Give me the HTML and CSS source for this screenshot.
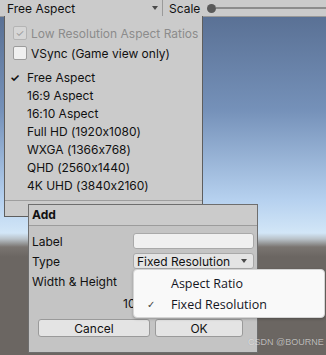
FILE: index.html
```html
<!DOCTYPE html>
<html lang="en">
<head>
    <meta charset="UTF-8">
    <title>Game View - Aspect</title>
    <link rel="stylesheet" href="styles.css">
</head>
<body>
    <div class="screen">
        <!-- Game view toolbar -->
        <div class="toolbar">
            <div class="tb-dropdown">
                <span>Free Aspect</span>
                <span class="tb-arrow"></span>
            </div>
            <div class="tb-scale">
                <span>Scale</span>
                <span class="knob"></span>
                <span class="track"></span>
            </div>
        </div>

        <!-- Scene behind the menus -->
        <div class="scene"></div>

        <!-- Aspect menu -->
        <div class="aspect-menu">
            <div class="check-row disabled">
                <span class="box checked">&#10003;</span>
                <span>Low Resolution Aspect Ratios</span>
            </div>
            <div class="check-row">
                <span class="box"></span>
                <span>VSync (Game view only)</span>
            </div>
            <ul class="aspects">
                <li class="active">Free Aspect</li>
                <li>16:9 Aspect</li>
                <li>16:10 Aspect</li>
                <li>Full HD (1920x1080)</li>
                <li>WXGA (1366x768)</li>
                <li>QHD (2560x1440)</li>
                <li>4K UHD (3840x2160)</li>
            </ul>
            <div class="menu-sep"></div>
        </div>

        <!-- Add dialog -->
        <div class="add-dialog">
            <div class="dlg-title">Add</div>
            <div class="dlg-body">
                <div class="field-row">
                    <label>Label</label>
                    <div class="text-field"></div>
                </div>
                <div class="field-row">
                    <label>Type</label>
                    <div class="popup-field">
                        <span>Fixed Resolution</span>
                        <span class="tb-arrow"></span>
                    </div>
                </div>
                <div class="field-row">
                    <label>Width &amp; Height</label>
                    <span class="num">1920</span>
                </div>
                <div class="field-row size-row">
                    <span class="num">1080</span>
                </div>
                <div class="buttons">
                    <button class="btn cancel">Cancel</button>
                    <button class="btn ok">OK</button>
                </div>
            </div>
        </div>

        <!-- Native popup for Type -->
        <div class="type-popup">
            <div class="popup-item">Aspect Ratio</div>
            <div class="popup-item selected">Fixed Resolution</div>
        </div>

        <div class="watermark">CSDN @BOURNE</div>
    </div>
</body>
</html>
```

FILE: styles.css
```css
body {
    margin: 0;
    padding: 0;
    font-family: Inter, "Noto Sans", sans-serif;
    font-size: 12px;
    font-feature-settings: "calt" 0;
    color: #111111;
}

.screen {
    position: relative;
    width: 326px;
    height: 355px;
    overflow: hidden;
    display: flex;
    flex-direction: column;
}

/* toolbar */
.toolbar {
    height: 16px;
    display: flex;
    align-items: center;
    background-color: #cbcbcb;
    border-bottom: 1px solid #999999;
}

.tb-dropdown {
    width: 160px;
    height: 16px;
    margin-left: 3px;
    padding: 0 4px;
    box-sizing: border-box;
    display: flex;
    align-items: center;
    justify-content: space-between;
    border-right: 1px solid #9a9a9a;
}

.tb-arrow {
    width: 0;
    height: 0;
    border-left: 3px solid transparent;
    border-right: 3px solid transparent;
    border-top: 4px solid #4a4a4a;
}

.tb-scale {
    flex: 1;
    display: flex;
    align-items: center;
    padding-left: 6px;
}

.knob {
    width: 9px;
    height: 9px;
    border-radius: 50%;
    background-color: #5a5a5a;
    margin-left: 7px;
}

.track {
    flex: 1;
    height: 2px;
    background-color: #8c8c8c;
}

/* scene */
.scene {
    flex: 1;
    background: linear-gradient(to bottom,
        #5a7195 0px,
        #7591b9 93px,
        #b6d1ef 183px,
        #d2e6f7 216px,
        #b9c2c9 222px,
        #7a7571 230px,
        #6b6662 240px,
        #6b6662 100%);
}

/* aspect menu */
.aspect-menu {
    position: absolute;
    left: 4px;
    top: 16px;
    width: 199px;
    height: 201px;
    box-sizing: border-box;
    background-color: #cbcbcb;
    border: 1px solid #5e5e5e;
    border-top: none;
    padding-top: 7px;
}

.check-row {
    height: 20px;
    display: flex;
    align-items: center;
    gap: 4px;
    padding-left: 8px;
}

.check-row.disabled {
    color: #8c8c8c;
}

.box {
    width: 12px;
    height: 12px;
    border: 1px solid #9c9c9c;
    border-radius: 2px;
    background-color: #f0f0f0;
    font-size: 10px;
    line-height: 12px;
    text-align: center;
    color: #9a9a9a;
}

.box.checked {
    background-color: #d6d6d6;
    border-color: #b4b4b4;
}

.aspects {
    list-style: none;
    margin: 6px 0 0 0;
    padding: 0;
}

.aspects li {
    height: 18px;
    line-height: 18px;
    padding-left: 22px;
    position: relative;
}

.aspects li.active:before {
    content: "\2713";
    position: absolute;
    left: 5px;
    font-size: 11px;
    font-weight: bold;
}

.menu-sep {
    height: 1px;
    margin: 5px 0 0 0;
    background-color: #9e9e9e;
}

/* add dialog */
.add-dialog {
    position: absolute;
    left: 28px;
    top: 204px;
    width: 230px;
    height: 149px;
    box-sizing: border-box;
    background-color: #c4c4c4;
    border: 1px solid #6e6e6e;
}

.dlg-title {
    height: 20px;
    line-height: 20px;
    padding-left: 3px;
    font-weight: bold;
    background-color: #cbcbcb;
    border-bottom: 1px solid #9c9c9c;
}

.dlg-body {
    padding: 5px 3px 0 3px;
}

.field-row {
    height: 20px;
    display: flex;
    align-items: center;
}

.field-row label {
    width: 101px;
    flex-shrink: 0;
}

.text-field {
    width: 121px;
    height: 16px;
    box-sizing: border-box;
    background-color: #f0f0f0;
    border: 1px solid #a9a9a9;
    border-radius: 3px;
}

.popup-field {
    width: 121px;
    height: 16px;
    box-sizing: border-box;
    background-color: #e4e4e4;
    border: 1px solid #a9a9a9;
    border-radius: 3px;
    padding: 0 6px 0 3px;
    display: flex;
    align-items: center;
    justify-content: space-between;
}

.size-row {
    height: 25px;
    padding-left: 91px;
}

.buttons {
    display: flex;
    gap: 5px;
    padding-left: 6px;
    margin-top: 3px;
}

.btn {
    height: 18px;
    box-sizing: border-box;
    padding: 0;
    font-family: Inter, "Noto Sans", sans-serif;
    font-size: 12px;
    color: #111111;
    background-color: #e4e4e4;
    border: 1px solid #9a9a9a;
    border-radius: 3px;
}

.cancel {
    width: 112px;
}

.ok {
    width: 88px;
}

/* native popup */
.type-popup {
    position: absolute;
    left: 133px;
    top: 269px;
    width: 192px;
    height: 49px;
    box-sizing: border-box;
    background-color: #f9f9f9;
    border: 1px solid #d4d4d4;
    border-radius: 4px;
    box-shadow: 0 1px 3px rgba(0, 0, 0, 0.25);
    padding-top: 3px;
    font-family: "Open Sans", "Noto Sans", sans-serif;
    font-size: 12.5px;
    color: #14161f;
}

.popup-item {
    height: 21px;
    line-height: 21px;
    padding-left: 37px;
    position: relative;
}

.popup-item.selected:before {
    content: "\2713";
    position: absolute;
    left: 13px;
    font-size: 10px;
    color: #444444;
}

.watermark {
    position: absolute;
    left: 248px;
    top: 337px;
    white-space: nowrap;
    font-family: "Liberation Sans", sans-serif;
    font-size: 9px;
    color: rgba(255, 255, 255, 0.6);
    text-shadow: 0 0 1px rgba(0, 0, 0, 0.2);
}
```
